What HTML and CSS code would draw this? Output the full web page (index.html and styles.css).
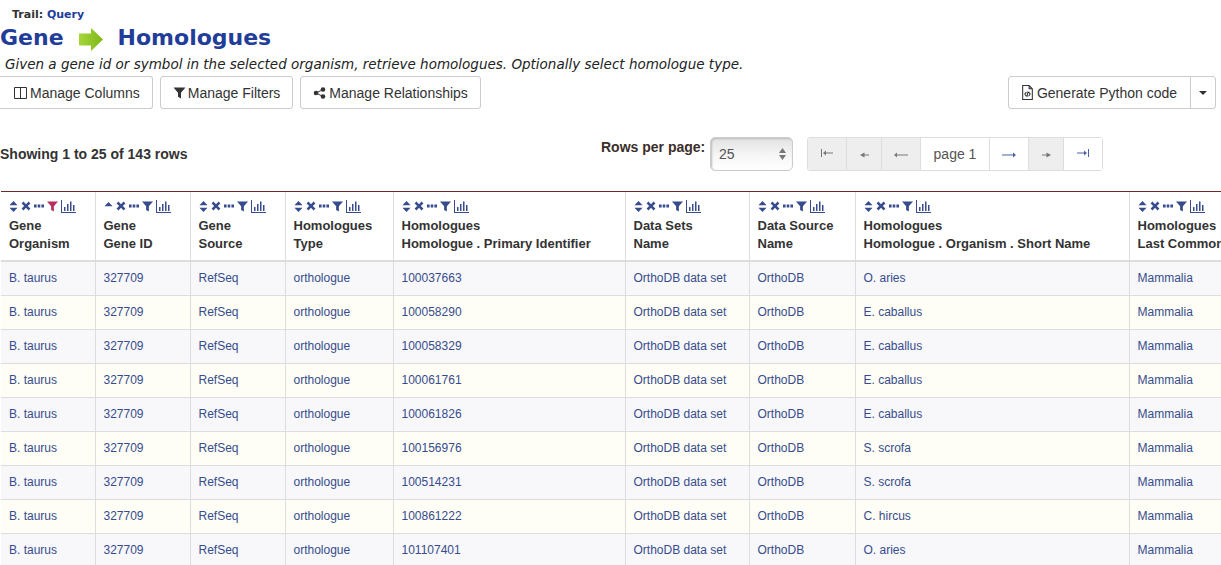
FILE: index.html
```html
<!DOCTYPE html>
<html lang="en">
<head>
  <meta charset="UTF-8" />
  <title>Gene to Homologues</title>
  <link rel="stylesheet" href="styles.css">
</head>
<body>
  <svg class="defs" width="0" height="0">
    <symbol id="i-sort" viewBox="0 0 10 12"><path d="M5 0l4.500 4.600h-9zM5 12L.5 7.400h9z"/></symbol>
    <symbol id="i-up" viewBox="0 0 10 12"><path d="M5 1l4.500 4.600h-9z"/></symbol>
    <symbol id="i-x" viewBox="0 0 10 10"><path d="M2.400 .6L5 3.200 7.600 .6l1.800 1.800L6.800 5l2.600 2.600-1.800 1.800L5 6.800 2.400 9.400 .6 7.600 3.200 5 .6 2.400z"/></symbol>
    <symbol id="i-dots" viewBox="0 0 10 4"><path d="M0 .5h2.600v3H0zM3.700 .5h2.600v3H3.700zM7.400 .5H10v3H7.400z"/></symbol>
    <symbol id="i-filter" viewBox="0 0 12 12"><path d="M0 .5h12L7.500 5.800V11.500l-3-1.800V5.800z"/></symbol>
    <symbol id="i-chart" viewBox="0 0 15 13"><path d="M0 0h1v12h14v1H0zM3 7h1.500v4H3zM6 4h1.500v7H6zM9 1.500h1.500V11H9zM12 5h1.500v6H12z"/></symbol>
    <symbol id="i-file" viewBox="0 0 12 14"><path fill="none" stroke="currentColor" d="M1.500 .5h6l3 3v10h-9zM7.500 .5v3h3M5 6.500L3.500 8.500 5 10.500M7 6.500l1.500 2-1.500 2M6.500 6L5.500 11"/></symbol>
    <symbol id="i-long" viewBox="0 0 14 6"><path d="M0 2.500h11V.5L14 3l-3 2.500v-2H0z"/></symbol>
    <symbol id="i-short" viewBox="0 0 9 6"><path d="M0 2.500h4.500V.5L9 3 4.500 5.500v-2H0z"/></symbol>
    <symbol id="i-edge" viewBox="0 0 12 8"><path d="M0 3.500h7v-2L10 4 7 6.500v-2H0zM11 0h1v8h-1z"/></symbol>
  </svg>

  <div class="trail">Trail: <a href="#">Query</a></div>
  <h1 class="title"><span>Gene</span>
    <svg class="arrow" viewBox="0 0 24 23"><defs><linearGradient id="g" x1="0" x2="1"><stop offset="0" stop-color="#a5d63a"/><stop offset="1" stop-color="#7fb817"/></linearGradient></defs><path fill="url(#g)" d="M0 5.500h12V0l12 11.500L12 23v-5.500H0z"/></svg>
    <span>Homologues</span></h1>
  <p class="desc">Given a gene id or symbol in the selected organism, retrieve homologues. Optionally select homologue type.</p>

  <div class="toolbar">
    <button class="btn btn-columns"><svg class="btn-icon" viewBox="0 0 13 12"><path fill="none" stroke="currentColor" d="M.5 .5h12v11H.5zM6.500 .5v11"/></svg>Manage Columns</button>
    <button class="btn btn-filters"><svg class="btn-icon" viewBox="0 0 12 12"><use href="#i-filter"/></svg>Manage Filters</button>
    <button class="btn"><svg class="btn-icon" viewBox="0 0 12 12"><circle cx="2.500" cy="6" r="2.300"/><circle cx="9.500" cy="2.500" r="2.300"/><circle cx="9.500" cy="9.500" r="2.300"/><path fill="none" stroke="currentColor" d="M2.500 6l7-3.500M2.500 6l7 3.500"/></svg>Manage Relationships</button>
    <div class="btn-group">
      <button class="btn btn-main"><svg class="btn-icon file" viewBox="0 0 12 14"><use href="#i-file"/></svg>Generate Python code</button>
      <button class="btn btn-caret"><i class="caret"></i></button>
    </div>
  </div>

  <div class="pager-row">
    <div class="showing">Showing 1 to 25 of 143 rows</div>
    <label class="per-page">Rows per page:</label>
    <div class="select">25<svg viewBox="0 0 7 12"><path d="M3.500 0L7 5H0zM3.500 12L0 7h7z"/></svg></div>
    <div class="pager">
      <a class="off first"><svg class="edge flip"><use href="#i-edge"/></svg></a>
      <a class="off step"><svg class="short flip"><use href="#i-short"/></svg></a>
      <a class="off"><svg class="long flip"><use href="#i-long"/></svg></a>
      <span class="page">page 1</span>
      <a class="on"><svg class="long"><use href="#i-long"/></svg></a>
      <a class="off step"><svg class="short"><use href="#i-short"/></svg></a>
      <a class="on"><svg class="edge"><use href="#i-edge"/></svg></a>
    </div>
  </div>

  <table class="results">
    <colgroup>
      <col class="c1"><col class="c2"><col class="c3"><col class="c4"><col class="c5"><col class="c6"><col class="c7"><col class="c8"><col class="c9">
    </colgroup>
    <thead id="head"></thead>
    <tbody id="rows"></tbody>
  </table>

  <script>
    const columns = [
      ["Gene", "Organism"],
      ["Gene", "Gene ID"],
      ["Gene", "Source"],
      ["Homologues", "Type"],
      ["Homologues", "Homologue . Primary Identifier"],
      ["Data Sets", "Name"],
      ["Data Source", "Name"],
      ["Homologues", "Homologue . Organism . Short Name"],
      ["Homologues", "Last Common Ancestor"]
    ];

    const homologues = [
      ["100037663", "O. aries"],
      ["100058290", "E. caballus"],
      ["100058329", "E. caballus"],
      ["100061761", "E. caballus"],
      ["100061826", "E. caballus"],
      ["100156976", "S. scrofa"],
      ["100514231", "S. scrofa"],
      ["100861222", "C. hircus"],
      ["101107401", "O. aries"]
    ];

    function icon(name, cls) {
      return `<svg class="${cls}"><use href="#${name}"/></svg>`;
    }

    document.getElementById("head").innerHTML = "<tr>" + columns.map((col, i) => {
      const sort = i === 1 ? icon("i-up", "ic sort") : icon("i-sort", "ic sort");
      const filterCls = i === 0 ? "ic filter active" : "ic filter";
      return `<th><div class="tools">${sort}${icon("i-x", "ic x")}${icon("i-dots", "ic dots")}${icon("i-filter", filterCls)}${icon("i-chart", "ic chart")}</div>${col[0]}<br>${col[1]}</th>`;
    }).join("") + "</tr>";

    document.getElementById("rows").innerHTML = homologues.map(h => {
      const cells = ["B. taurus", "327709", "RefSeq", "orthologue", h[0], "OrthoDB data set", "OrthoDB", h[1], "Mammalia"];
      return "<tr>" + cells.map(c => `<td><a href="#">${c}</a></td>`).join("") + "</tr>";
    }).join("");
  </script>
</body>
</html>
```
FILE: styles.css
```css
html, body {
  height: 100%;
  overflow: hidden;
}

body {
  margin: 0;
  padding-top: 7px;
  box-sizing: border-box;
  background: #fff;
  color: #333;
  font-family: "Liberation Sans", Arial, sans-serif;
  font-size: 14px;
}

a {
  text-decoration: none;
  color: #364c8c;
}

.defs {
  position: absolute;
}

.trail {
  padding-left: 12px;
  height: 15px;
  font-family: "DejaVu Sans", sans-serif;
  font-size: 11px;
  line-height: 15px;
  font-weight: bold;
}

.trail a {
  color: #1f3d99;
}

.title {
  display: flex;
  align-items: center;
  margin: 1px 0 0;
  height: 29px;
  font-family: "DejaVu Sans", sans-serif;
  font-size: 22px;
  line-height: 29px;
  font-weight: bold;
  color: #1f3d99;
}

.arrow {
  width: 24px;
  height: 23px;
  margin: 3px 15px 0 15px;
}

.desc {
  margin: 4px 0 0 5px;
  height: 16px;
  font-family: "DejaVu Sans", sans-serif;
  font-size: 13.500px;
  line-height: 16px;
  font-style: italic;
  color: #222;
}

.toolbar {
  display: flex;
  gap: 7px;
  margin-top: 4px;
  height: 33px;
  padding-right: 5px;
}

.btn {
  height: 33px;
  padding: 0 12px;
  background: #fff;
  border: 1px solid #ccc;
  border-radius: 3px;
  color: #333;
  font-family: "Liberation Sans", Arial, sans-serif;
  font-size: 14px;
  display: flex;
  align-items: center;
}

.toolbar > .btn-columns {
  padding-left: 14px;
  border-left: none;
  border-top-left-radius: 0;
  border-bottom-left-radius: 0;
}

.btn-icon {
  width: 13px;
  height: 12px;
  margin-right: 3px;
  fill: #333;
  color: #333;
}

.btn-filters .btn-icon {
  margin-right: 2px;
}

.btn-icon.file {
  height: 15px;
  margin-right: 3px;
  fill: none;
}

.btn-group {
  display: flex;
  margin-left: auto;
}

.btn-main {
  padding-right: 13px;
  border-radius: 3px 0 0 3px;
}

.btn-caret {
  margin-left: -1px;
  width: 26px;
  justify-content: center;
  padding: 0;
  border-radius: 0 3px 3px 0;
}

.caret {
  border-top: 4px solid #333;
  border-left: 4px solid transparent;
  border-right: 4px solid transparent;
}

.pager-row {
  display: flex;
  align-items: flex-start;
  margin-top: 28px;
  height: 34px;
}

.showing {
  width: 601px;
  padding-top: 9px;
  font-size: 14px;
  line-height: 17px;
  font-weight: bold;
}

.per-page {
  width: 109px;
  padding-top: 2px;
  font-size: 14px;
  line-height: 16px;
  font-weight: bold;
  color: #3a2e2a;
}

.select {
  display: flex;
  align-items: center;
  justify-content: space-between;
  box-sizing: border-box;
  width: 83px;
  height: 34px;
  padding: 0 6px 0 8px;
  background: linear-gradient(#e2e2e2, #f6f6f6 55%, #fff);
  border: 1px solid #ccc;
  border-radius: 5px;
  box-shadow: inset 1px 1px 2px #bbb;
  font-size: 14px;
  color: #555;
}

.select svg {
  width: 7px;
  height: 12px;
  fill: #777;
}

.pager {
  display: flex;
  margin-left: 14px;
  height: 34px;
  border: 1px solid #ddd;
  border-radius: 3px;
  box-sizing: border-box;
}

.pager a, .pager .page {
  display: flex;
  align-items: center;
  justify-content: center;
  box-sizing: border-box;
  width: 39px;
  border-left: 1px solid #ddd;
}

.pager a.first {
  width: 38px;
  border-left: none;
}

.pager .off {
  background: #eee;
  color: #777;
}

.pager .on {
  background: #fff;
  color: #4a62a0;
}

.pager .step {
  width: 35px;
}

.pager .page {
  width: 69px;
  background: #fff;
  color: #555;
  font-size: 14px;
}

.pager svg {
  fill: currentColor;
  display: block;
}

.pager .long { width: 14px; height: 6px; margin-top: 2px; }
.pager .short { width: 9px; height: 6px; margin-top: 2px; }
.pager .edge { width: 12px; height: 8px; margin-bottom: 2px; }
.pager .flip { transform: scaleX(-1); }

.results {
  margin-top: 20px;
  margin-left: 1px;
  border-collapse: collapse;
  table-layout: fixed;
  width: 1320px;
  font-size: 12px;
}

.c1 { width: 94px; }
.c2, .c3 { width: 95px; }
.c4 { width: 108px; }
.c5 { width: 232px; }
.c6 { width: 124px; }
.c7 { width: 106px; }
.c8 { width: 274px; }
.c9 { width: 192px; }

.results th {
  height: 69px;
  box-sizing: border-box;
  padding: 0 8px 7px;
  text-align: left;
  vertical-align: top;
  white-space: nowrap;
  border-top: 1px solid #6d2a2a;
  border-left: 1px solid #ddd;
  border-bottom: 2px solid #ddd;
  font-size: 13px;
  line-height: 18px;
  color: #333;
}

.results th:first-child {
  border-left: none;
}

.tools {
  display: flex;
  align-items: center;
  gap: 3px;
  height: 16px;
  margin-top: 6px;
  margin-bottom: 3px;
}

.ic {
  fill: #364c8c;
  display: block;
}

.ic.sort { width: 9px; height: 11px; }
.ic.x { width: 10px; height: 10px; }
.ic.dots { width: 10px; height: 4px; }
.ic.filter { width: 11px; height: 11px; }
.ic.filter.active { fill: #b5305c; }
.ic.chart { width: 15px; height: 13px; }

.results td {
  height: 34px;
  box-sizing: border-box;
  padding: 0 8px;
  border-left: 1px solid #ddd;
  border-bottom: 1px solid #ddd;
  white-space: nowrap;
  overflow: hidden;
}

.results td:first-child {
  border-left: none;
}

.results tbody tr:nth-child(odd) {
  background: #f8f8fa;
}

.results tbody tr:nth-child(even) {
  background: #fefef6;
}
```
